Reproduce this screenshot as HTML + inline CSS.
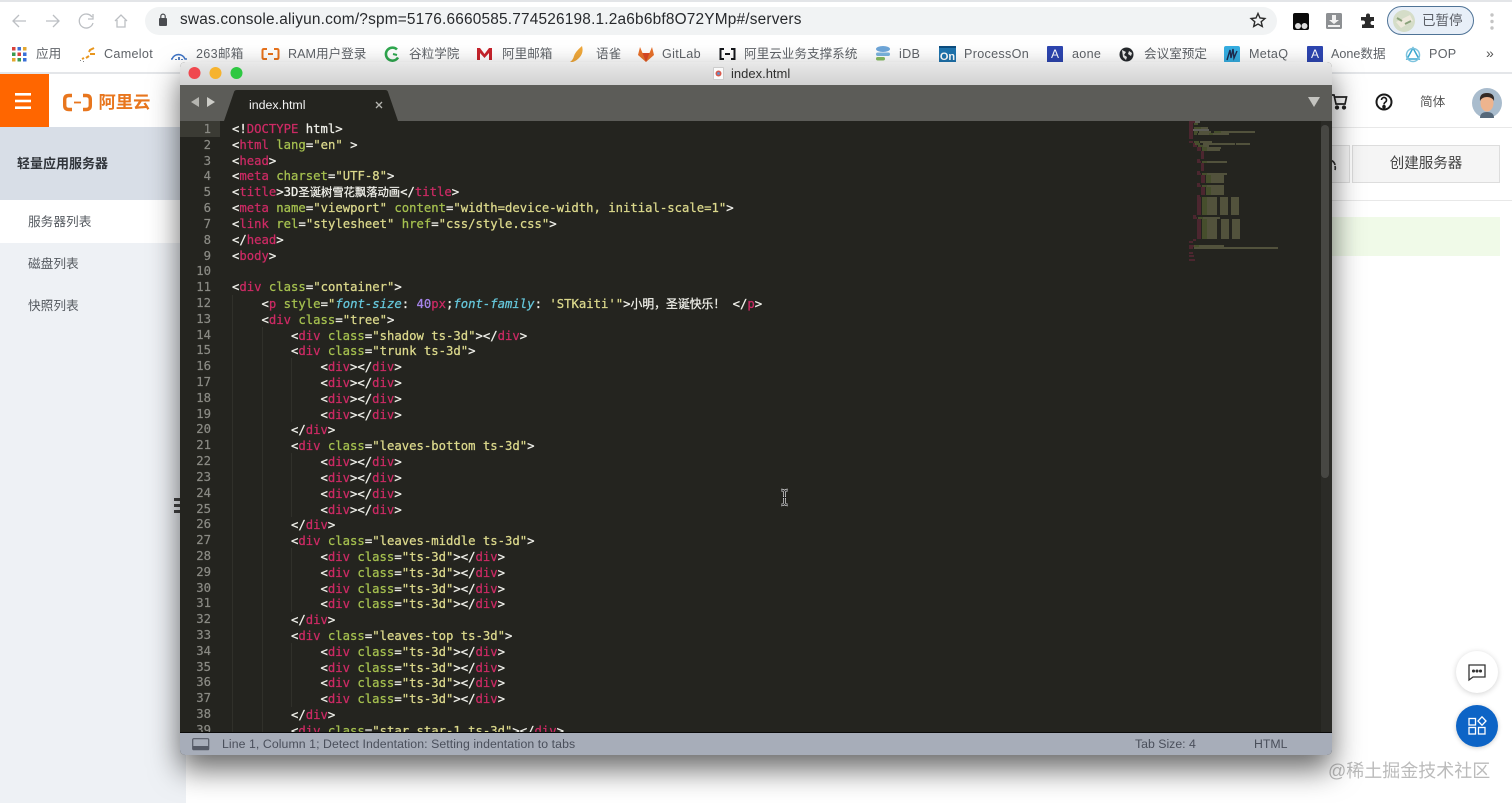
<!DOCTYPE html>
<html lang="zh">
<head>
<meta charset="UTF-8">
<title>index.html</title>
<style>
*{box-sizing:border-box}
html,body{margin:0;padding:0;width:1512px;height:803px;overflow:hidden;background:#fff}
body{font-family:"Liberation Sans","Noto Sans CJK SC",sans-serif;position:relative}
#w{position:absolute;inset:0;filter:blur(.35px)}
.a{position:absolute;white-space:nowrap}
.b{font-size:12.6px;color:#5f6368;top:46px;line-height:16px}
.l{letter-spacing:.3px}
svg{position:absolute;overflow:visible}
#code{position:absolute;left:232px;top:121px;margin:0;font:12.26px/15.81px "DejaVu Sans Mono","Liberation Mono","Noto Sans CJK SC",monospace;color:#f0f0ea;white-space:pre;-webkit-text-stroke:.25px}
#nums{position:absolute;left:180px;top:122px;width:31px;margin:0;font:12.26px/15.81px "DejaVu Sans Mono",monospace;color:#8a8a84;text-align:right;white-space:pre;-webkit-text-stroke:.2px}
#code i{font-style:normal;color:#cc2a64}
#code u{text-decoration:none;color:#a5c04f}
#code s{text-decoration:none;color:#dcd98c}
#code em{color:#66c8dc}
#code b{font-weight:normal;color:#a584e8}
#code q{quotes:none;font-family:"Noto Sans CJK SC",sans-serif;font-size:11.3px}
#code q.w{font-size:11.85px}
</style>
</head>
<body>
<div id="w">
<!-- browser chrome -->
<div class="a" style="left:0;top:0;width:1512px;height:2px;background:#e3e5e8"></div>
<div class="a" style="left:145px;top:7px;width:1132px;height:28px;border-radius:14px;background:#f1f3f4"></div>
<svg style="left:0;top:0" width="300" height="40" fill="none" stroke="#bcbfc3" stroke-width="1.300">
<path d="M26 21H13M19 15l-6 6 6 6"/>
<path d="M46 21h13M53 15l6 6-6 6"/>
<path d="M92 17a7 7 0 1 0 1 6M93 14v5h-5"/>
<path d="M115 21l6-6 6 6M117 20v7h8v-7"/>
<rect x="159" y="18" width="8" height="8" rx="1" fill="#4a4c50" stroke="none"/>
<path d="M160.800 18v-1.700a2.200 2.200 0 0 1 4.400 0V18" stroke="#4a4c50" stroke-width="1.200"/>
</svg>
<div class="a" style="left:180px;top:11px;font-size:15.4px;line-height:18px;letter-spacing:.2px;color:#27292c">swas.console.aliyun.com/?spm=5176.6660585.774526198.1.2a6b6bf8O72YMp#/servers</div>
<svg style="left:1250px;top:12px" width="16" height="16" viewBox="0 0 16 16"><path d="M8 1.500l2 4.500 4.900.5-3.700 3.200 1.100 4.800L8 12l-4.300 2.500 1.100-4.800L1.100 6.500 6 6z" fill="none" stroke="#2b2b2b" stroke-width="1.400"/></svg>
<svg style="left:1290px;top:10px" width="22" height="22" viewBox="0 0 22 22"><path d="M3 5q0-2 2-2h12q2 0 2 2v13q0 2-2 2H5q-2 0-2-2z" fill="#0a0a0a"/><circle cx="8" cy="16" r="3" fill="#ddd"/><circle cx="14.500" cy="16" r="3" fill="#ddd"/></svg>
<svg style="left:1325px;top:12px" width="18" height="18" viewBox="0 0 18 18"><rect x="1" y="1" width="16" height="16" rx="1.500" fill="#8d9093"/><path d="M7 3h4v5h3l-5 4-5-4h3zM3 13h12v2H3z" fill="#f2f2f2"/></svg>
<svg style="left:1360px;top:13px" width="16" height="16" viewBox="0 0 16 16"><path d="M6 2.500a2 2 0 0 1 4 0V4h4v4h-1.500a2 2 0 0 0 0 4H14v3H2v-3.500h1a2 2 0 0 0 0-4H1V4h5z" fill="#2b2b2b"/></svg>
<div class="a" style="left:1387px;top:6px;width:87px;height:29px;border:1.500px solid #4f7396;border-radius:15px;background:#e8eff8"></div>
<svg style="left:1391px;top:9px" width="26" height="24" viewBox="0 0 26 24"><circle cx="13" cy="12" r="11" fill="#d5ddc8"/><path d="M5 13l14-7 3 6-12 7z" fill="#eee9dc"/><path d="M6 9l5 3M14 15l6-3" stroke="#8aa27a" stroke-width="2"/></svg>
<div class="a" style="left:1422px;top:11.500px;font-size:13.500px;line-height:18px;color:#5c6068">已暂停</div>
<svg style="left:1488px;top:12px" width="8" height="20"><circle cx="4" cy="3" r="1.700" fill="#c4c4c4"/><circle cx="4" cy="9.500" r="1.700" fill="#c4c4c4"/><circle cx="4" cy="16" r="1.700" fill="#c4c4c4"/></svg>

<!-- bookmarks -->
<svg style="left:12px;top:47px" width="15" height="15"><g><rect width="3.500" height="3.500" fill="#d9413a"/><rect x="5.500" width="3.500" height="3.500" fill="#3a6fd8"/><rect x="11" width="3.500" height="3.500" fill="#e3a72f"/><rect y="5.500" width="3.500" height="3.500" fill="#3a9b4f"/><rect x="5.500" y="5.500" width="3.500" height="3.500" fill="#d9413a"/><rect x="11" y="5.500" width="3.500" height="3.500" fill="#3a6fd8"/><rect y="11" width="3.500" height="3.500" fill="#e3a72f"/><rect x="5.500" y="11" width="3.500" height="3.500" fill="#3a9b4f"/><rect x="11" y="11" width="3.500" height="3.500" fill="#3a6fd8"/></g></svg>
<div class="a b" style="left:36px">应用</div>
<svg style="left:78px;top:45px" width="18" height="18" fill="none" stroke="#e8961e" stroke-width="2"><path d="M16 3l-4 2-1 2M17 9h-5M11 11l-3 2M6 13l-2 1"/><path d="M2 15.500h.8M5 16.500h.8" stroke="#666" stroke-width="1"/></svg>
<div class="a b l" style="left:104px">Camelot</div>
<svg style="left:170px;top:47px" width="18" height="14" fill="none" stroke="#3f74c5" stroke-width="1.600"><path d="M1 12h1a7 7 0 0 1 13 0h2"/><path d="M6 12v1M9 10v3M12 12v1" stroke="#2e5faa"/></svg>
<div class="a b l" style="left:196px">263邮箱</div>
<svg style="left:261px;top:47px" width="19" height="14" fill="none" stroke="#e8721c" stroke-width="2"><path d="M6 2H3Q1.500 2 1.500 3.500v7Q1.500 12 3 12h3M13 2h3q1.500 0 1.500 1.500v7Q17.500 12 16 12h-3M7 7h5" /></svg>
<div class="a b" style="left:288px">RAM用户登录</div>
<svg style="left:384px;top:45px" width="16" height="18" fill="none" stroke="#2fa84f" stroke-width="2.600"><path d="M13 4.500a6.500 6.500 0 1 0 1 8"/><path d="M9 9l4 1" stroke-width="2"/></svg>
<div class="a b" style="left:409px">谷粒学院</div>
<svg style="left:476px;top:47px" width="17" height="14"><path d="M1 13V1h3l4.500 6L13 1h3v12h-3V6L8.500 11 4 6v7z" fill="#c8232c"/></svg>
<div class="a b" style="left:502px">阿里邮箱</div>
<svg style="left:569px;top:45px" width="17" height="18"><path d="M13 1q2 7-3 12t-9 4q3-2 4-6t8-10z" fill="#f0a83a"/></svg>
<div class="a b" style="left:596px">语雀</div>
<svg style="left:637px;top:45px" width="18" height="18"><path d="M9 17L1 10l2-8 2.500 6h7L15 2l2 8z" fill="#e8712b"/><path d="M9 17L5.500 8h7z" fill="#db4a26"/></svg>
<div class="a b l" style="left:662px">GitLab</div>
<svg style="left:718px;top:47px" width="19" height="14" fill="none" stroke="#16181c" stroke-width="2"><path d="M6 2H2.500v10H6M13 2h3.500v10H13M7 7h5"/></svg>
<div class="a b" style="left:744px">阿里云业务支撑系统</div>
<svg style="left:875px;top:45px" width="17" height="18"><ellipse cx="8" cy="4" rx="7" ry="3" fill="#6ea6d9"/><rect x="1" y="7.500" width="14" height="3.500" rx="1.700" fill="#7bb4dd"/><rect x="1" y="12" width="9" height="3.500" rx="1.700" fill="#88bd62"/></svg>
<div class="a b l" style="left:899px">iDB</div>
<div class="a" style="left:939px;top:46px;width:17px;height:17px;background:#1f74ae;color:#fff;font:bold 11px/19px 'Liberation Sans',sans-serif;text-align:center;border-top:2px solid #0c4c7e">On</div>
<div class="a b l" style="left:964px">ProcessOn</div>
<div class="a" style="left:1047px;top:46px;width:16px;height:17px;background:#2d45b0;color:#fff;font:12px/17px 'Liberation Sans',sans-serif;text-align:center;border-radius:1px">A</div>
<div class="a b l" style="left:1072px">aone</div>
<svg style="left:1119px;top:47px" width="15" height="15"><circle cx="7.500" cy="7.500" r="7" fill="#26292d"/><path d="M3 3l4 2-2 3 3 2-1 3-3-3zM10 4l3 2-1 3-3-2z" fill="#e9e9e9"/></svg>
<div class="a b" style="left:1144px">会议室预定</div>
<div class="a" style="left:1224px;top:46px;width:16px;height:17px;background:#35aee2;border-radius:2px"></div>
<svg style="left:1224px;top:46px" width="16" height="17" fill="none" stroke="#1e2b50" stroke-width="1.400"><path d="M3 14L6 4l1 8 2-9 1 9 3-7"/></svg>
<div class="a b l" style="left:1249px">MetaQ</div>
<div class="a" style="left:1307px;top:46px;width:16px;height:17px;background:#2d45b0;color:#fff;font:12px/17px 'Liberation Sans',sans-serif;text-align:center;border-radius:1px">A</div>
<div class="a b" style="left:1331px">Aone数据</div>
<svg style="left:1405px;top:46px" width="16" height="17" fill="none" stroke="#3aa7cf" stroke-width="1.500"><path d="M8 2L14 13H2z"/><circle cx="8" cy="9" r="6.500" stroke="#7dc3de"/></svg>
<div class="a b l" style="left:1429px">POP</div>
<div class="a" style="left:1486px;top:45px;font-size:14px;line-height:16px;color:#555">»</div>
<div class="a" style="left:0;top:72px;width:1512px;height:2px;background:#e4e6e9"></div>

<!-- console page -->
<div class="a" style="left:0;top:127px;width:186px;height:676px;background:#eef1f5"></div>
<div class="a" style="left:0;top:127px;width:186px;height:73px;background:#d8dee7"></div>
<div class="a" style="left:0;top:200px;width:186px;height:43px;background:#fff"></div>
<div class="a" style="left:186px;top:127px;width:1326px;height:1px;background:#e8e8e8"></div>
<div class="a" style="left:0;top:74px;width:49px;height:53px;background:#ff6600"></div>
<svg style="left:15px;top:93px" width="17" height="17" fill="#fff"><rect y="0" width="16" height="2.600"/><rect y="6.700" width="16" height="2.600"/><rect y="13.400" width="16" height="2.600"/></svg>
<svg style="left:62px;top:93px" width="32" height="19" fill="none" stroke="#e8761e" stroke-width="3.400"><path d="M10 2.500H7Q2.700 2.500 2.700 6.500v6Q2.700 16.500 7 16.500h3M21 2.500h3q4.300 0 4.300 4v6q0 4-4.300 4h-3"/><path d="M12 9.500h7" stroke-width="1.800"/></svg>
<div class="a" style="left:98.500px;top:92px;font-size:17.300px;line-height:21px;font-weight:bold;color:#e8761e">阿里云</div>
<div class="a" style="left:17px;top:155px;font-size:13px;line-height:18px;font-weight:bold;color:#30343a">轻量应用服务器</div>
<div class="a" style="left:28px;top:213px;font-size:12.700px;line-height:18px;color:#555a60">服务器列表</div>
<div class="a" style="left:28px;top:255px;font-size:12.700px;line-height:18px;color:#555a60">磁盘列表</div>
<div class="a" style="left:28px;top:297px;font-size:12.700px;line-height:18px;color:#555a60">快照列表</div>
<div class="a" style="left:174px;top:498px;width:7px;height:2.500px;background:#444;box-shadow:0 6px #444,0 12px #444"></div>

<svg style="left:1330px;top:93px" width="20" height="18" fill="none" stroke="#222" stroke-width="1.700"><path d="M1 2h3l2 9h9l1.500-7H5"/><circle cx="7" cy="14.500" r="1.300" fill="#222"/><circle cx="14" cy="14.500" r="1.300" fill="#222"/></svg>
<svg style="left:1375px;top:93px" width="18" height="18" fill="none" stroke="#1a1a1a" stroke-width="2"><circle cx="9" cy="9" r="7.500"/><path d="M6.500 7a2.500 2.500 0 1 1 4 2q-1.500 1-1.500 2.500" stroke-width="1.600"/><circle cx="9" cy="13.700" r=".8" fill="#1a1a1a"/></svg>
<div class="a" style="left:1420px;top:93px;font-size:12.700px;line-height:18px;color:#555">简体</div>
<svg style="left:1472px;top:88px" width="30" height="30"><circle cx="15" cy="15" r="15" fill="#a9bccd"/><path d="M8 30q0-6 7-6t7 6z" fill="#56687a"/><ellipse cx="15" cy="15" rx="6.500" ry="8.500" fill="#eeb48e"/><path d="M8 13q-1-8 7-8t7 8q-2-4-7-4t-7 4z" fill="#332a26"/></svg>
<div class="a" style="left:1300px;top:145px;width:50px;height:38px;background:#f5f5f5;border:1px solid #ddd"></div>
<svg style="left:1326px;top:157px" width="12" height="16" fill="none" stroke="#333" stroke-width="1.700"><path d="M3 3a6 6 0 0 1 6 5M9 13a6 6 0 0 0 0-4"/></svg>
<div class="a" style="left:1352px;top:145px;width:148px;height:38px;background:#f5f5f5;border:1px solid #ddd;font-size:14.500px;line-height:37px;text-align:center;color:#444">创建服务器</div>
<div class="a" style="left:186px;top:200px;width:1326px;height:1px;background:#e8e8e8"></div>
<div class="a" style="left:1300px;top:217px;width:200px;height:39px;background:#f0fae8"></div>

<div class="a" style="left:1456px;top:651px;width:42px;height:42px;border-radius:50%;background:#fff;box-shadow:0 1px 6px rgba(0,0,0,.18)"></div>
<svg style="left:1468px;top:664px" width="19" height="18" fill="none" stroke="#333" stroke-width="1.300"><path d="M1 1h16v12H5l-4 3z"/><circle cx="5.500" cy="7" r=".9" fill="#333"/><circle cx="9" cy="7" r=".9" fill="#333"/><circle cx="12.500" cy="7" r=".9" fill="#333"/></svg>
<div class="a" style="left:1456px;top:705px;width:42px;height:42px;border-radius:50%;background:#0d64c6;box-shadow:0 1px 5px rgba(0,0,0,.2)"></div>
<svg style="left:1468px;top:716px" width="20" height="20" fill="none" stroke="#fff" stroke-width="1.300"><rect x="1" y="2.500" width="6.500" height="6.500"/><rect x="1" y="11.500" width="6.500" height="6.500"/><rect x="10.500" y="11.500" width="6.500" height="6.500"/><path d="M14 0.800l4 4.200-4 4.200-4-4.200z"/></svg>
<div class="a" style="left:1328px;top:760px;font-size:18px;line-height:22px;color:#bbb">@稀土掘金技术社区</div>

<!-- editor window -->
<div class="a" style="left:180px;top:62px;width:1152px;height:693px;border-radius:5px;background:#24241f;box-shadow:0 14px 30px rgba(0,0,0,.6)"></div>
<div class="a" style="left:180px;top:62px;width:1152px;height:23px;border-radius:5px 5px 0 0;background:linear-gradient(#e9e9e9,#d1d1d1)"></div>
<svg style="left:187px;top:66px" width="60" height="14"><circle cx="7.500" cy="7" r="6" fill="#f0484f"/><circle cx="28.500" cy="7" r="6" fill="#f6b32e"/><circle cx="49.500" cy="7" r="6" fill="#2ec842"/></svg>
<div class="a" style="left:713px;top:67px;width:11px;height:13px;background:#fafafa;border:1px solid #ccc;border-radius:1px"></div>
<svg style="left:715px;top:70px" width="7" height="7"><circle cx="3.500" cy="3.500" r="3" fill="#d9584a"/><circle cx="3.500" cy="3.500" r="1.400" fill="#5a95d6"/></svg>
<div class="a" style="left:731px;top:65px;font-size:13px;line-height:17px;color:#30302f">index.html</div>
<div class="a" style="left:180px;top:85px;width:1152px;height:36px;background:#5c5c58"></div>
<svg style="left:190px;top:96px" width="26" height="12" fill="#b5b5b0"><path d="M1 6l8-5v10z"/><path d="M17 1l8 5-8 5z" fill="#cdcdc8"/></svg>
<svg style="left:224px;top:90px" width="176" height="31"><path d="M0 31L10 2q.5-2 3-2h148q2.500 0 3 2l10 29z" fill="#24241f"/></svg>
<div class="a" style="left:249px;top:97px;font-size:12.400px;line-height:16px;color:#f2f2f2">index.html</div>
<svg style="left:375px;top:101px" width="8" height="8" stroke="#b5b5b0" stroke-width="1.300"><path d="M1 1l6 6M7 1L1 7"/></svg>
<svg style="left:1308px;top:97px" width="12" height="11"><path d="M0 0h12L6 10z" fill="#c4c4c0"/></svg>

<!-- gutter -->
<div class="a" style="left:180px;top:121px;width:40px;height:16px;background:#3b3b34"></div>
<pre id="nums">1
2
3
4
5
6
7
8
9
10
11
12
13
14
15
16
17
18
19
20
21
22
23
24
25
26
27
28
29
30
31
32
33
34
35
36
37
38
39</pre>
<!-- indent guides -->
<div class="a" style="left:232px;top:295px;width:1px;height:437px;background:#30302a"></div>
<div class="a" style="left:262px;top:327px;width:1px;height:405px;background:#30302a"></div>
<div class="a" style="left:291px;top:358px;width:1px;height:64px;background:#30302a"></div>
<div class="a" style="left:291px;top:453px;width:1px;height:64px;background:#30302a"></div>
<div class="a" style="left:291px;top:548px;width:1px;height:64px;background:#30302a"></div>
<div class="a" style="left:291px;top:643px;width:1px;height:64px;background:#30302a"></div>
<div class="a" style="left:180px;top:121px;width:1152px;height:611px;overflow:hidden">
<pre id="code" style="left:52px;top:1px">&lt;!<i>DOCTYPE</i> html&gt;
&lt;<i>html</i> <u>lang</u>=<s>"en"</s> &gt;
&lt;<i>head</i>&gt;
&lt;<i>meta</i> <u>charset</u>=<s>"UTF-8"</s>&gt;
&lt;<i>title</i>&gt;3D<q>圣诞树雪花飘落动画</q>&lt;/<i>title</i>&gt;
&lt;<i>meta</i> <u>name</u>=<s>"viewport"</s> <u>content</u>=<s>"width=device-width, initial-scale=1"</s>&gt;
&lt;<i>link</i> <u>rel</u>=<s>"stylesheet"</s> <u>href</u>=<s>"css/style.css"</s>&gt;
&lt;/<i>head</i>&gt;
&lt;<i>body</i>&gt;

&lt;<i>div</i> <u>class</u>=<s>"container"</s>&gt;
    &lt;<i>p</i> <u>style</u>=<s>"</s><em>font-size</em>: <b>40</b><i>px</i>;<em>font-family</em>: <s>'STKaiti'"</s>&gt;<q class="w">小明，圣诞快乐！</q> &lt;/<i>p</i>&gt;
    &lt;<i>div</i> <u>class</u>=<s>"tree"</s>&gt;
        &lt;<i>div</i> <u>class</u>=<s>"shadow ts-3d"</s>&gt;&lt;/<i>div</i>&gt;
        &lt;<i>div</i> <u>class</u>=<s>"trunk ts-3d"</s>&gt;
            &lt;<i>div</i>&gt;&lt;/<i>div</i>&gt;
            &lt;<i>div</i>&gt;&lt;/<i>div</i>&gt;
            &lt;<i>div</i>&gt;&lt;/<i>div</i>&gt;
            &lt;<i>div</i>&gt;&lt;/<i>div</i>&gt;
        &lt;/<i>div</i>&gt;
        &lt;<i>div</i> <u>class</u>=<s>"leaves-bottom ts-3d"</s>&gt;
            &lt;<i>div</i>&gt;&lt;/<i>div</i>&gt;
            &lt;<i>div</i>&gt;&lt;/<i>div</i>&gt;
            &lt;<i>div</i>&gt;&lt;/<i>div</i>&gt;
            &lt;<i>div</i>&gt;&lt;/<i>div</i>&gt;
        &lt;/<i>div</i>&gt;
        &lt;<i>div</i> <u>class</u>=<s>"leaves-middle ts-3d"</s>&gt;
            &lt;<i>div</i> <u>class</u>=<s>"ts-3d"</s>&gt;&lt;/<i>div</i>&gt;
            &lt;<i>div</i> <u>class</u>=<s>"ts-3d"</s>&gt;&lt;/<i>div</i>&gt;
            &lt;<i>div</i> <u>class</u>=<s>"ts-3d"</s>&gt;&lt;/<i>div</i>&gt;
            &lt;<i>div</i> <u>class</u>=<s>"ts-3d"</s>&gt;&lt;/<i>div</i>&gt;
        &lt;/<i>div</i>&gt;
        &lt;<i>div</i> <u>class</u>=<s>"leaves-top ts-3d"</s>&gt;
            &lt;<i>div</i> <u>class</u>=<s>"ts-3d"</s>&gt;&lt;/<i>div</i>&gt;
            &lt;<i>div</i> <u>class</u>=<s>"ts-3d"</s>&gt;&lt;/<i>div</i>&gt;
            &lt;<i>div</i> <u>class</u>=<s>"ts-3d"</s>&gt;&lt;/<i>div</i>&gt;
            &lt;<i>div</i> <u>class</u>=<s>"ts-3d"</s>&gt;&lt;/<i>div</i>&gt;
        &lt;/<i>div</i>&gt;
        &lt;<i>div</i> <u>class</u>=<s>"star star-1 ts-3d"</s>&gt;&lt;/<i>div</i>&gt;</pre>
</div>
<!-- minimap -->
<svg style="left:1188px;top:121px" width="95" height="140" fill="none" stroke-width=".8" opacity=".85">
<path stroke="#a02a52" d="M1 1h6M1 3h4M1 5h4M1 7h4M1 9h5M1 11h4M1 13h4M1 15h4M1 17h4M1 21h4M5 23h3M5 25h4M9 27h4M9 29h4M13 31h3M13 33h3M13 35h3M13 37h3M9 39h3M9 41h4M13 43h3M13 45h3M13 47h3M13 49h3M9 51h3M9 53h4M13 55h4M13 57h4M13 59h4M13 61h4M9 63h3M9 65h4M13 67h4M13 69h4M13 71h4M13 73h4M9 75h3M9 77h4M9 79h4M9 81h4M9 83h4M9 85h4M9 87h4M9 89h4M9 91h4M9 93h4M5 95h3M5 97h4M9 99h4M9 101h4M9 103h4M9 105h4M9 107h4M9 109h4M9 111h4M9 113h4M9 115h4M9 117h4M5 119h3M1 121h4M1 125h6M1 127h4M1 132h4M1 135h5M1 139h6"/>
<path stroke="#8ea64a" d="M6 3h4M6 7h7M6 11h4M6 13h3M26 11h7M21 13h4M6 21h5M7 23h5M10 25h5M14 27h5M14 29h5M14 41h5M14 53h5M18 55h5M18 57h5M18 59h5M18 61h5M14 65h5M18 67h5M18 69h5M18 71h5M18 73h5M14 77h5M14 79h5M14 81h5M14 83h5M14 85h5M14 87h5M14 89h5M14 91h5M14 93h5M10 97h5M14 99h5M14 101h5M14 103h5M14 105h5M14 107h5M14 109h5M14 111h5M14 113h5M14 115h5M14 117h5M6 125h5"/>
<path stroke="#b5b27a" d="M13 7h7M11 11h12M33 11h34M10 13h11M25 13h16M12 21h12M15 23h20M35 23h12M48 23h14M15 25h6M19 27h14M19 29h13M19 41h20M19 53h20M23 55h13M23 57h13M23 59h13M23 61h13M19 65h17M23 67h13M23 69h13M23 71h13M23 73h13M19 77h10M32 77h8M43 77h8M19 79h10M32 79h8M43 79h8M19 81h10M32 81h8M43 81h8M19 83h10M32 83h8M43 83h8M19 85h10M32 85h8M43 85h8M19 87h10M32 87h8M43 87h8M19 89h10M32 89h8M43 89h8M19 91h10M32 91h8M43 91h8M19 93h10M32 93h8M43 93h8M15 97h17M19 99h10M33 99h8M44 99h8M19 101h10M33 101h8M44 101h8M19 103h10M33 103h8M44 103h8M19 105h10M33 105h8M44 105h8M19 107h10M33 107h8M44 107h8M19 109h10M33 109h8M44 109h8M19 111h10M33 111h8M44 111h8M19 113h10M33 113h8M44 113h8M19 115h10M33 115h8M44 115h8M19 117h10M33 117h8M44 117h8M11 125h25M6 127h38M44 127h46"/>
<path stroke="#d8d8d0" d="M7 1h5M5 9h10M15 9h6"/>
</svg>
<!-- scrollbar -->
<div class="a" style="left:1321px;top:121px;width:11px;height:611px;background:#2b2b27"></div>
<div class="a" style="left:1321px;top:125px;width:8px;height:353px;border-radius:4px;background:#474743"></div>
<!-- I-beam -->
<svg style="left:780px;top:489px" width="9" height="17" fill="none"><path d="M1 1q3 0 3.500 2V14Q4 16 1 16M8 1Q5 1 4.500 3M8 16Q5 16 4.500 14M3 8.500h3" stroke="#ddd" stroke-width="2.500"/><path d="M1 1q3 0 3.500 2V14Q4 16 1 16M8 1Q5 1 4.500 3M8 16Q5 16 4.500 14M3 8.500h3" stroke="#222" stroke-width="1.100"/></svg>
<!-- status bar -->
<div class="a" style="left:180px;top:732px;width:1152px;height:1px;background:#0a0a0a"></div>
<div class="a" style="left:180px;top:733px;width:1152px;height:22px;border-radius:0 0 5px 5px;background:#a7adb9"></div>
<svg style="left:192px;top:738px" width="18" height="13"><rect x=".7" y=".7" width="16" height="11" rx="1" fill="#a7adb9" stroke="#555a66" stroke-width="1.200"/><rect x="1" y="8" width="15.500" height="4" fill="#555a66"/></svg>
<div class="a" style="left:222px;top:736px;font-size:12.300px;line-height:16px;color:#4a4f5b;letter-spacing:.07px">Line 1, Column 1; Detect Indentation: Setting indentation to tabs</div>
<div class="a" style="left:1135px;top:736px;font-size:12.300px;line-height:16px;color:#4a4f5b">Tab Size: 4</div>
<div class="a" style="left:1254px;top:736px;font-size:12.300px;line-height:16px;color:#4a4f5b">HTML</div>
</div>
</body>
</html>
